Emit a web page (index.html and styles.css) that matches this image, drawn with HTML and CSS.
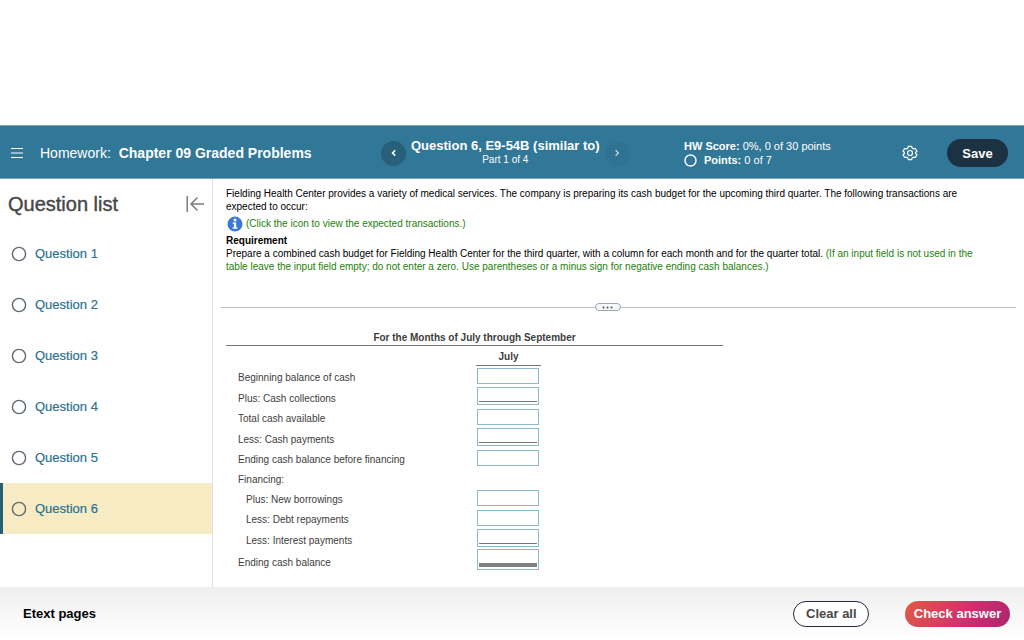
FILE: index.html
```html
<!DOCTYPE html>
<html lang="en">
<head>
    <meta charset="UTF-8">
    <meta name="viewport" content="width=device-width, initial-scale=1.0">
    <title>Homework: Chapter 09 Graded Problems</title>
    <link rel="stylesheet" href="styles.css">
</head>
<body>
    <header class="topbar">
        <div class="topbar-title">
            <button class="icon-button" aria-label="Menu">
                <svg width="12" height="12" viewBox="0 0 12 12" stroke="#fff" stroke-width="1.2"><path d="M0 1.5h12M0 6h12M0 10.5h12"/></svg>
            </button>
            <h1><span>Homework:</span> Chapter 09 Graded Problems</h1>
        </div>
        <nav class="question-nav">
            <button class="nav-button" aria-label="Previous question">
                <svg width="10" height="10" viewBox="0 0 10 10" fill="none" stroke="#fff" stroke-width="1.6"><path d="M6.2 2.4 3.6 5l2.6 2.6"/></svg>
            </button>
            <div class="question-name">
                <strong>Question 6, E9-54B (similar to)</strong>
                <span>Part 1 of 4</span>
            </div>
            <button class="nav-button nav-next" aria-label="Next question">
                <svg width="10" height="10" viewBox="0 0 10 10" fill="none" stroke="#b9d3df" stroke-width="1.4"><path d="M3.6 2.2 6.4 5 3.6 7.8"/></svg>
            </button>
        </nav>
        <div class="score">
            <div><strong>HW Score:</strong> 0%, 0 of 30 points</div>
            <div class="points">
                <svg width="13" height="13" viewBox="0 0 13 13"><circle cx="6.5" cy="6.5" r="5.5" fill="none" stroke="#fff" stroke-width="1.4"/></svg>
                <span><strong>Points:</strong> 0 of 7</span>
            </div>
        </div>
        <div class="topbar-actions">
            <button class="icon-button" aria-label="Settings">
                <svg width="16" height="16" viewBox="0 0 16 16" fill="none" stroke="#fff" stroke-width="1.2" stroke-linejoin="round"><path d="M6.4 1.3h3.2l.6 1.8 1.3.8 1.9-.4 1.6 2.8-1.3 1v1.4l1.3 1-1.6 2.8-1.9-.4-1.3.8-.6 1.8H6.4l-.6-1.8-1.3-.8-1.9.4L1 9.7l1.3-1V7.3L1 6.3l1.6-2.8 1.9.4 1.3-.8z"/><circle cx="8" cy="8" r="2.5"/></svg>
            </button>
            <button class="pill save">Save</button>
        </div>
    </header>

    <main class="main">
        <aside class="sidebar">
            <div class="sidebar-head">
                <h2>Question list</h2>
                <button class="icon-button" aria-label="Collapse question list">
                    <svg width="18" height="16" viewBox="0 0 18 16" fill="none" stroke="#7b7b7b" stroke-width="1.5"><path d="M1.2 0v16M18 8H5M11.5 1.5 5 8l6.5 6.5"/></svg>
                </button>
            </div>
            <ul class="question-list">
                <li><a href="#"><svg class="status" width="16" height="16" viewBox="0 0 16 16"><circle cx="8" cy="8" r="6.6"/></svg>Question 1</a></li>
                <li><a href="#"><svg class="status" width="16" height="16" viewBox="0 0 16 16"><circle cx="8" cy="8" r="6.6"/></svg>Question 2</a></li>
                <li><a href="#"><svg class="status" width="16" height="16" viewBox="0 0 16 16"><circle cx="8" cy="8" r="6.6"/></svg>Question 3</a></li>
                <li><a href="#"><svg class="status" width="16" height="16" viewBox="0 0 16 16"><circle cx="8" cy="8" r="6.6"/></svg>Question 4</a></li>
                <li><a href="#"><svg class="status" width="16" height="16" viewBox="0 0 16 16"><circle cx="8" cy="8" r="6.6"/></svg>Question 5</a></li>
                <li><a href="#" class="active"><svg class="status" width="16" height="16" viewBox="0 0 16 16"><circle cx="8" cy="8" r="6.6"/></svg>Question 6</a></li>
            </ul>
        </aside>

        <section class="content">
            <div class="problem">
                <p>Fielding Health Center provides a variety of medical services. The company is preparing its cash budget for the upcoming third quarter. The following transactions are expected to occur:</p>
                <a href="#" class="info-link">
                    <svg width="16" height="16" viewBox="0 0 16 16"><circle cx="8" cy="8" r="7.5" fill="#3b78d8"/><circle cx="8" cy="3.9" r="1.5" fill="#fff"/><path d="M5.8 6.5h3.4v4.8h1.2v1.4H5.7v-1.4h1.2V7.9H5.800z" fill="#fff"/></svg>
                    (Click the icon to view the expected transactions.)
                </a>
                <h3>Requirement</h3>
                <p>Prepare a combined cash budget for Fielding Health Center for the third quarter, with a column for each month and for the quarter total. <span class="hint">(If an input field is not used in the table leave the input field empty; do not enter a zero. Use parentheses or a minus sign for negative ending cash balances.)</span></p>
            </div>

            <div class="divider">
                <button class="divider-handle" aria-label="Resize">
                    <svg width="11" height="3" viewBox="0 0 11 3" fill="#4a5560"><circle cx="1.5" cy="1.5" r="1"/><circle cx="5.5" cy="1.5" r="1"/><circle cx="9.5" cy="1.5" r="1"/></svg>
                </button>
            </div>

            <table class="budget">
                <colgroup>
                    <col class="col-label">
                    <col class="col-month">
                    <col>
                </colgroup>
                <thead>
                    <tr><th colspan="3" class="period">For the Months of July through September</th></tr>
                    <tr><td></td><th class="month">July</th><td></td></tr>
                </thead>
                <tbody>
                    <tr><td><label for="beginning">Beginning balance of cash</label></td><td><input type="text" id="beginning"></td><td></td></tr>
                    <tr class="sum"><td><label for="collections">Plus: Cash collections</label></td><td><span class="field"><input type="text" id="collections"></span></td><td></td></tr>
                    <tr><td><label for="available">Total cash available</label></td><td><input type="text" id="available"></td><td></td></tr>
                    <tr class="sum"><td><label for="payments">Less: Cash payments</label></td><td><span class="field"><input type="text" id="payments"></span></td><td></td></tr>
                    <tr><td><label for="before">Ending cash balance before financing</label></td><td><input type="text" id="before"></td><td></td></tr>
                    <tr><td>Financing:</td><td></td><td></td></tr>
                    <tr class="sub"><td><label for="borrowings">Plus: New borrowings</label></td><td><input type="text" id="borrowings"></td><td></td></tr>
                    <tr class="sub"><td><label for="repayments">Less: Debt repayments</label></td><td><input type="text" id="repayments"></td><td></td></tr>
                    <tr class="sub sum"><td><label for="interest">Less: Interest payments</label></td><td><span class="field"><input type="text" id="interest"></span></td><td></td></tr>
                    <tr class="sum total"><td><label for="ending">Ending cash balance</label></td><td><span class="field"><input type="text" id="ending"></span></td><td></td></tr>
                </tbody>
            </table>
        </section>
    </main>

    <footer class="footer">
        <a href="#" class="etext">Etext pages</a>
        <div class="footer-actions">
            <button class="pill clear">Clear all</button>
            <button class="pill check">Check answer</button>
        </div>
    </footer>
</body>
</html>
```

FILE: styles.css
```css
* {
    box-sizing: border-box;
}
body {
    margin: 0;
    padding-top: 125px;
    min-height: 100vh;
    display: flex;
    flex-direction: column;
    font-family: "Liberation Sans", Arial, sans-serif;
    font-size: 10px;
    color: #000;
    background: #fff;
}
h1, h2, h3, p, ul {
    margin: 0;
    padding: 0;
}
button {
    font-family: inherit;
    cursor: pointer;
}
a {
    text-decoration: none;
}
svg {
    display: block;
}
.icon-button {
    background: none;
    border: none;
    padding: 0;
}

/* top bar */
.topbar {
    display: grid;
    grid-template-columns: 381px 303px 1fr auto;
    align-items: center;
    height: 54px;
    padding-top: 2px;
    background: #317797;
    border-top: 1px solid #7fa9b9;
    border-bottom: 1px solid #7aa5ba;
    color: #fff;
}
.topbar-title {
    display: flex;
    align-items: center;
    gap: 17px;
    padding-left: 11px;
}
.topbar-title h1 {
    font-size: 14px;
}
.topbar-title h1 span {
    font-weight: normal;
    margin-right: 4px;
}
.question-nav {
    display: flex;
    align-items: center;
    gap: 5px;
}
.nav-button {
    display: flex;
    align-items: center;
    justify-content: center;
    width: 25px;
    height: 25px;
    padding: 0;
    border: none;
    border-radius: 50%;
    background: #285f79;
}
.nav-next {
    background: #2f7291;
}
.question-name {
    display: flex;
    flex-direction: column;
    align-items: center;
    font-size: 10px;
    line-height: 14px;
    white-space: nowrap;
}
.question-name strong {
    font-size: 13px;
}
.score {
    font-size: 11px;
    line-height: 14px;
}
.points {
    display: flex;
    align-items: center;
    gap: 7px;
}
.topbar-actions {
    display: flex;
    align-items: center;
    gap: 29px;
    padding-right: 16px;
}
.pill {
    padding: 0 12px;
    border: none;
    border-radius: 14px;
    font-size: 13px;
    font-weight: bold;
    white-space: nowrap;
}
.save {
    width: 61px;
    height: 28px;
    background: #1c3242;
    color: #fff;
}

/* question list */
.main {
    display: flex;
    flex: 1;
}
.sidebar {
    flex: none;
    width: 213px;
    border-right: 1px solid #dfe1e8;
}
.sidebar-head {
    display: flex;
    align-items: center;
    justify-content: space-between;
    height: 49px;
    padding: 1px 8px 0;
}
.sidebar-head h2 {
    font-size: 20px;
    font-weight: normal;
    color: #474747;
    -webkit-text-stroke: 0.4px #474747;
}
.question-list {
    list-style: none;
}
.question-list a {
    display: flex;
    align-items: center;
    gap: 8px;
    height: 51px;
    padding-left: 8px;
    border-left: 3px solid transparent;
    font-size: 13px;
    color: #2b7291;
    -webkit-text-stroke: 0.2px #2b7291;
}
.question-list .active {
    background: #f7ebc3;
    border-left-color: #255f78;
}
.status {
    fill: none;
    stroke: #5f6a75;
    stroke-width: 1.4;
}

/* problem text */
.content {
    flex: 1;
    min-width: 0;
    padding: 8px 8px 0;
}
.problem {
    padding: 0 30px 0 5px;
    line-height: 13px;
}
.problem h3 {
    font-size: 10px;
}
.info-link {
    display: flex;
    align-items: center;
    gap: 3px;
    height: 21px;
    padding-left: 1px;
    color: #24800a;
}
.hint {
    color: #24800a;
}
.divider {
    display: flex;
    align-items: center;
    margin-top: 30px;
}
.divider::before,
.divider::after {
    content: "";
    flex: 1;
    height: 1px;
    background: #c0c2c9;
}
.divider::before {
    flex: 0 0 47%;
}
.divider-handle {
    display: flex;
    align-items: center;
    justify-content: center;
    width: 26px;
    height: 8px;
    padding: 0;
    border: 1px solid #9ba4b0;
    border-radius: 4px;
    background: #f5f8fa;
}

/* budget table */
.budget {
    width: 497px;
    margin: 18px 0 0 5px;
    border-collapse: separate;
    border-spacing: 0;
    table-layout: fixed;
    color: #3d3d3d;
}
.col-label {
    width: 250px;
}
.col-month {
    width: 65px;
}
.budget td,
.budget th {
    height: 20px;
    padding: 0;
}
.budget .period {
    height: 17px;
    border-bottom: 1px solid #777;
}
.budget .month {
    padding-top: 2px;
    border-bottom: 1px solid #777;
}
.budget td:first-child {
    padding: 2px 0 0 12px;
}
.budget .sub td:first-child {
    padding-left: 20px;
}
.budget .sum td {
    height: 21px;
    padding-bottom: 2px;
}
.budget .sum td:first-child {
    padding-top: 4px;
    padding-bottom: 0;
}
.budget input {
    display: block;
    width: 62px;
    height: 16px;
    margin-left: 1px;
    padding: 0 2px;
    border: 1px solid #90b8cc;
    background: #fff;
    font: inherit;
}
.field {
    display: block;
    width: 62px;
    margin-left: 1px;
    padding: 0 1px 2px;
    border: 1px solid #90b8cc;
}
.budget .field input {
    width: 100%;
    height: 14px;
    margin: 0;
    border: none;
    border-bottom: 1px solid #777;
}
.budget .total td {
    height: 23px;
}
.budget .total input {
    height: 17px;
    border-bottom: 4px solid #808080;
}

/* footer */
.footer {
    display: flex;
    align-items: center;
    justify-content: space-between;
    height: 53px;
    padding: 0 14px 0 23px;
    background: linear-gradient(#efefef, #fff);
}
.etext {
    font-size: 13px;
    font-weight: bold;
    color: #000;
}
.footer-actions {
    display: flex;
    gap: 36px;
}
.clear {
    width: 76px;
    height: 26px;
    border: 1px solid #252b3d;
    background: #fff;
    color: #474747;
}
.check {
    width: 105px;
    height: 26px;
    padding: 0;
    background: linear-gradient(120deg, #e15a43, #d02e6f 60%, #a9256f);
    color: #fff;
}
```
